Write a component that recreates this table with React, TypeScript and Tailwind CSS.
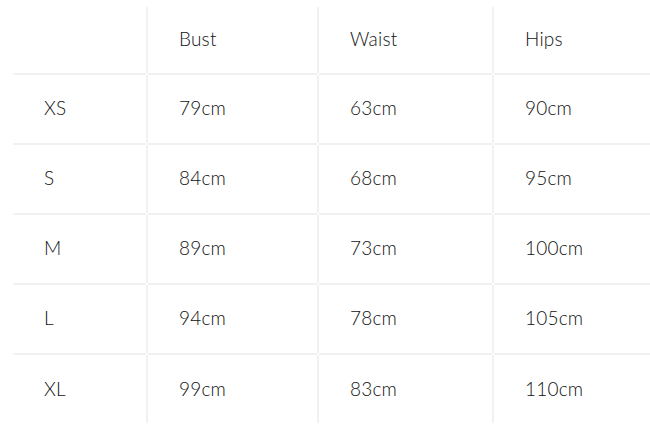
const header = ["", "Bust", "Waist", "Hips"];

const rows = [
    ["XS", "79cm", "63cm", "90cm"],
    ["S", "84cm", "68cm", "95cm"],
    ["M", "89cm", "73cm", "100cm"],
    ["L", "94cm", "78cm", "105cm"],
    ["XL", "99cm", "83cm", "110cm"],
];

// widths include the 2px separator on the left of columns 2-4
const colWidths = ["w-[133px]", "w-[171px]", "w-[175px]", "flex-1"];

function Row({ cells, height, last }: { cells: string[]; height: string; last?: boolean }) {
    return (
        <div className={`flex ${height}`}>
            {cells.map((text, i) => (
                <div key={i} className={`flex shrink-0 ${colWidths[i]}`}>
                    {i > 0 && (
                        <div className="w-[2px] shrink-0 flex flex-col">
                            <div className="flex-1 mb-[2px] bg-[#f1f1f1]" />
                        </div>
                    )}
                    <div
                        className={`flex flex-1 items-center pl-[31px] pb-[1px] ${
                            last ? "" : "border-b-2 border-[#f1f1f1]"
                        }`}
                    >
                        <span className="text-[19px] font-light text-[#111] tracking-[0.2px]">{text}</span>
                    </div>
                </div>
            ))}
        </div>
    );
}

export default function App() {
    return (
        <div
            className="w-[650px] h-[442px] bg-white pt-[7px] pl-[13px] overflow-hidden"
            style={{ fontFamily: "Lato, 'Noto Sans', sans-serif" }}
        >
            <Row cells={header} height="h-[68px]" />
            {rows.map((r, i) => (
                <Row key={r[0]} cells={r} height="h-[70px]" last={i === rows.length - 1} />
            ))}
        </div>
    );
}
